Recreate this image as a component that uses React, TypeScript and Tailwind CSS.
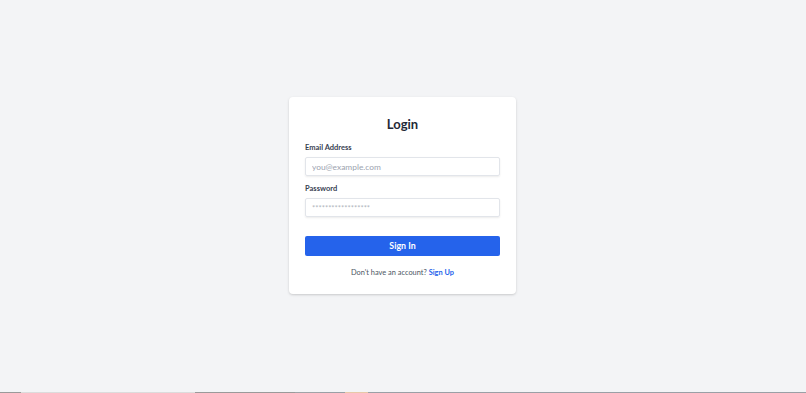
import React from "react";

export default function App() {
  return (
    <div className="flex min-h-[393px] w-full flex-col bg-[#f3f4f6]" style={{ fontFamily: "Lato, 'Noto Sans', sans-serif" }}>
      <div className="flex h-[392px] items-center justify-center pb-[1px] pr-[1px]">
        <div className="flex w-[227px] flex-col rounded-[4px] bg-white px-[16px] pb-[16px] pt-[19px] shadow-[0_1px_3px_rgba(0,0,0,0.12),0_1px_2px_rgba(0,0,0,0.06)]">
          <h1 className="text-center text-[13px] font-bold leading-[16px] text-[#1f2937]">Login</h1>
          <label className="mt-[11px] block text-[7.5px] font-bold leading-[10px] text-[#374151]">Email Address</label>
          <input
            type="email"
            placeholder="you@example.com"
            className="mt-[4px] h-[19px] w-full rounded-[2px] border border-[#e2e5ea] px-[6px] text-[8.4px] text-[#374151] shadow-[0_1px_2px_rgba(0,0,0,0.08)] outline-none placeholder:text-[#9ca3af]"
          />
          <label className="mt-[8px] block text-[7.5px] font-bold leading-[10px] text-[#374151]">Password</label>
          <input
            type="password"
            placeholder="******************"
            className="mt-[4px] h-[19px] w-full rounded-[2px] border border-[#e2e5ea] px-[6px] text-[7.6px] text-[#374151] shadow-[0_1px_2px_rgba(0,0,0,0.08)] outline-none placeholder:text-[#b0b5bd]"
          />
          <button className="mt-[19px] h-[20px] w-full rounded-[2px] bg-[#2563eb] text-[8.8px] font-bold leading-[20px] text-white">
            Sign In
          </button>
          <p className="mt-[12px] text-center text-[7.4px] leading-[10px] text-[#4b5563]">
            Don't have an account? <a className="font-bold text-[#2563eb]">Sign Up</a>
          </p>
        </div>
      </div>
      <div className="flex h-[1px] w-full">
        <div className="w-[21px] bg-[#9a9a9a]" />
        <div className="w-[174px] bg-[#dcdcdc]" />
        <div className="w-[100px] bg-[#9a9a9a]" />
        <div className="w-[25px] bg-[#a0a4a8]" />
        <div className="w-[25px] bg-[#9aa0a6]" />
        <div className="w-[23px] bg-[#e8c8a8]" />
        <div className="flex-1 bg-[#9aa0a6]" />
      </div>
    </div>
  );
}
